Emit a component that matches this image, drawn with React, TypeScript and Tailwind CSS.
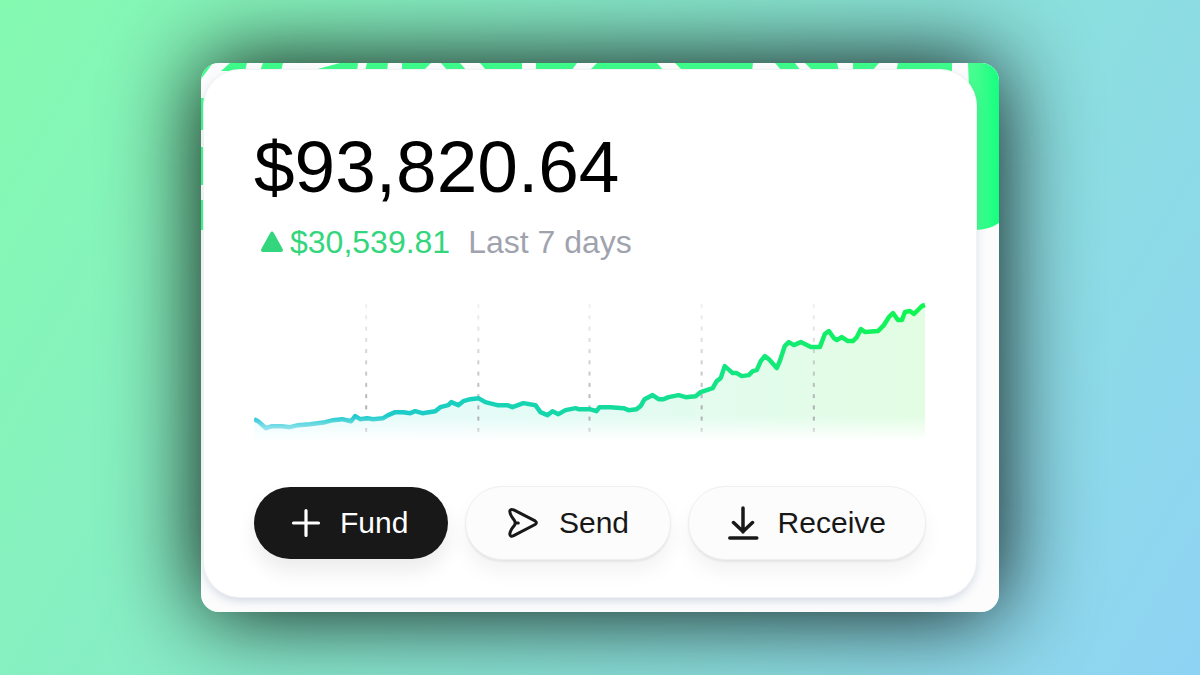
import React from 'react';

interface ChartPoint {
  x: number;
  y: number;
}

const CHART_WIDTH = 671;
const CHART_HEIGHT = 150;

const balanceHistory: number[][] = [
  [0, 119], [4, 121], [12, 128], [18, 126], [28, 126], [36, 127], [44, 125], [56, 124],
  [71, 122], [79, 120], [88, 119], [97, 121], [101, 116], [106, 119], [113, 118], [119, 119],
  [129, 118], [134, 115], [141, 112], [149, 112], [156, 113], [161, 111], [168, 113], [181, 111],
  [186, 107], [194, 105], [197, 102], [204, 105], [209, 101], [216, 99], [224, 98], [231, 102],
  [243, 105], [253, 105], [258, 107], [269, 103], [281, 105], [286, 112], [293, 115], [298, 111],
  [304, 114], [311, 110], [321, 108], [324, 109], [335, 109], [342, 111], [345, 107], [356, 107],
  [369, 108], [374, 110], [382, 109], [386, 106], [390, 99], [398, 95], [404, 99], [409, 99],
  [414, 97], [424, 95], [431, 97], [441, 96], [446, 92], [458, 88], [462, 81], [466, 78],
  [470, 66], [478, 73], [482, 73], [487, 76], [494, 75], [498, 71], [502, 70], [506, 61],
  [510, 56], [514, 59], [522, 68], [525, 61], [530, 46], [534, 42], [539, 45], [546, 42],
  [556, 47], [565, 47], [570, 34], [574, 31], [579, 38], [582, 40], [587, 37], [593, 41],
  [598, 41], [602, 37], [606, 29], [610, 32], [623, 31], [629, 25], [634, 17], [638, 13],
  [643, 20], [647, 20], [650, 12], [655, 11], [659, 14], [667, 6], [670, 5],
];

const gridLines = [112, 224, 335, 447, 559];

const points: ChartPoint[] = balanceHistory.map(([x, y]) => ({ x, y }));

const BalanceChart: React.FC = () => {
  const line = points.map((p, i) => `${i === 0 ? 'M' : 'L'}${p.x} ${p.y}`).join(' ');
  const area = `${line} V${CHART_HEIGHT} H0 Z`;

  return (
    <svg
      viewBox={`0 0 ${CHART_WIDTH} ${CHART_HEIGHT}`}
      className="mt-[38px] block h-auto w-full"
      role="img"
      aria-label="Balance over the last 7 days"
    >
      <defs>
        <linearGradient id="line" gradientUnits="userSpaceOnUse" x1="0" y1="0" x2="671" y2="0">
          <stop offset="0" stopColor="#1fc4d8" />
          <stop offset="0.25" stopColor="#1bcdc6" />
          <stop offset="0.5" stopColor="#14d9a2" />
          <stop offset="0.75" stopColor="#14e87c" />
          <stop offset="1" stopColor="#0ff74f" />
        </linearGradient>
        <linearGradient id="area" gradientUnits="userSpaceOnUse" x1="0" y1="0" x2="671" y2="0">
          <stop offset="0" stopColor="#e6fbfd" />
          <stop offset="0.5" stopColor="#e3fbf4" />
          <stop offset="1" stopColor="#e2fde3" />
        </linearGradient>
        <linearGradient id="grid" gradientUnits="userSpaceOnUse" x1="0" y1="0" x2="0" y2="130">
          <stop offset="0" stopColor="#b4b4bc" stopOpacity="0.15" />
          <stop offset="1" stopColor="#a0a0a8" stopOpacity="1" />
        </linearGradient>
        <linearGradient id="fade" x1="0" y1="0" x2="0" y2="1">
          <stop offset="0.77" stopColor="#fff" />
          <stop offset="0.94" stopColor="#000" />
        </linearGradient>
        <mask id="bottomFade" maskUnits="userSpaceOnUse" x="0" y="0" width="671" height="150">
          <rect width="671" height="150" fill="url(#fade)" />
        </mask>
      </defs>
      <g mask="url(#bottomFade)">
        <path d={area} fill="url(#area)" />
        {gridLines.map((x) =>
          Array.from({ length: 12 }, (_, i) => (
            <rect key={`${x}-${i}`} x={x - 1} y={4 + i * 11.25} width="2" height="4" fill="url(#grid)" />
          ))
        )}
        <path d={line} fill="none" stroke="url(#line)" strokeWidth="4.5" strokeLinejoin="round" />
      </g>
    </svg>
  );
};

// Green artwork that peeks out from behind the card
const Backdrop: React.FC = () => (
  <svg
    viewBox="0 0 798 549"
    className="absolute inset-0 h-full w-full"
    preserveAspectRatio="none"
    aria-hidden="true"
  >
    <defs>
      <linearGradient id="panel" gradientUnits="userSpaceOnUse" x1="767" y1="0" x2="798" y2="0">
        <stop offset="0.2" stopColor="#46fd8f" />
        <stop offset="1" stopColor="#16ff80" />
      </linearGradient>
    </defs>
    <g fill="#3dfc8a">
      <path d="M0 0H12L0 16Z" />
      <path d="M29 0H46L44 8H20Z" />
      <path d="M62 0H82L80 8H59Z" />
      <path d="M139 0H157L156 8H109Z" />
      <path d="M166 0H187L186 8H164Z" />
      <path d="M201 0H230L222 8H201Z" />
      <path d="M240 0H259L266 8H247Z" />
      <path d="M279 0H321V8H286Z" />
      <path d="M335 0H376L370 8H335Z" />
      <path d="M396 0H456L463 8H388Z" />
      <path d="M474 0H552L551 8H482Z" />
      <path d="M574 0H594L600 8H581Z" />
      <path d="M604 0H636L638 8H612Z" />
      <path d="M652 0H678L671 8H652Z" />
      <path d="M697 0H751V10H695Z" />
      <path d="M0 35H4V67H0Z" />
      <path d="M0 84H4V122H0Z" />
      <path d="M0 137H4V167H0Z" />
    </g>
    <path d="M767 0H798V160Q788 167 774 167L768 24Z" fill="url(#panel)" />
  </svg>
);

const PlusIcon: React.FC = () => (
  <svg viewBox="0 0 32 32" className="size-8 shrink-0" fill="none" stroke="currentColor" strokeWidth="3.2" strokeLinecap="round">
    <path d="M16 3.5v25M3.5 16h25" />
  </svg>
);

const SendIcon: React.FC = () => (
  <svg viewBox="0 0 32 32" className="size-8 shrink-0" fill="none" stroke="currentColor" strokeWidth="3" strokeLinecap="round" strokeLinejoin="round">
    <path d="M6.7 2.9 28.1 13.9Q30.7 15.7 28.1 17.5L6.7 28.7Q3.1 30.2 2.8 27.2Q3.1 23.5 7.3 18.6Q9.1 16 7.3 13.2Q3.1 8 2.8 4.3Q3.3 1.5 6.7 2.9Z" />
    <path d="M8.3 16h3" />
  </svg>
);

const ReceiveIcon: React.FC = () => (
  <svg viewBox="0 0 32 34" className="h-[34px] w-8 shrink-0" fill="none" stroke="currentColor" strokeWidth="3.5" strokeLinecap="round" strokeLinejoin="round">
    <path d="M15 2v24M5.5 16.5l9.500 9 9.500-9" />
    <path d="M1.800 32h27" />
  </svg>
);

const lightButton =
  'flex h-[74px] items-center justify-center rounded-full border border-[#efefef] bg-[#fcfcfc] px-[39px] text-[#181818] shadow-[0_2px_2px_rgba(0,0,0,0.06),0_12px_20px_rgba(0,0,0,0.05)]';

const App: React.FC = () => {
  return (
    <div className="flex min-h-screen items-center justify-center overflow-hidden bg-[linear-gradient(120deg,#84fab0_0%,#8fd3f4_100%)] font-['Liberation_Sans',Arial,sans-serif]">
      <div className="relative w-full max-w-[798px] rounded-[18px] shadow-[0_0_90px_rgba(0,0,0,0.95)]">
        <div className="relative overflow-hidden rounded-[18px] bg-[#fcfcfd] pt-[7px] pr-[23px] pb-[15px] pl-[3px]">
          <Backdrop />
          <main className="relative rounded-[36px] bg-white px-[50px] pt-[61px] pb-[37px] shadow-[0_0_0_1px_#f0f2f4,0_4px_10px_rgba(90,120,150,0.25)]">
            <h1 className="text-[73px] leading-[72px] text-black">$93,820.64</h1>

            <div className="mt-[19px] flex items-center text-[32px] leading-10">
              <svg viewBox="0 0 24 22" className="mr-1.5 ml-1.5 h-[22px] w-6" fill="#33d67c" aria-hidden="true">
                <path d="M10.3 1.7Q12 -.5 13.7 1.7L22.7 18Q23.5 21 21 21H3Q.5 21 1.3 18Z" />
              </svg>
              <span className="text-[#33d67c]">$30,539.81</span>
              <span className="ml-[18px] text-[#9fa3ae]">Last 7 days</span>
            </div>

            <BalanceChart />

            <div className="mt-9 flex items-center gap-[17px] text-[30px] leading-9">
              <button
                type="button"
                className="flex h-[72px] items-center justify-center gap-[18px] rounded-full bg-[#181818] pr-10 pl-9 text-white shadow-[0_12px_20px_rgba(0,0,0,0.08)]"
              >
                <PlusIcon />
                Fund
              </button>
              <button type="button" className={`${lightButton} grow gap-5`}>
                <SendIcon />
                Send
              </button>
              <button type="button" className={`${lightButton} gap-[18px]`}>
                <ReceiveIcon />
                Receive
              </button>
            </div>
          </main>
        </div>
      </div>
    </div>
  );
};

export default App;
